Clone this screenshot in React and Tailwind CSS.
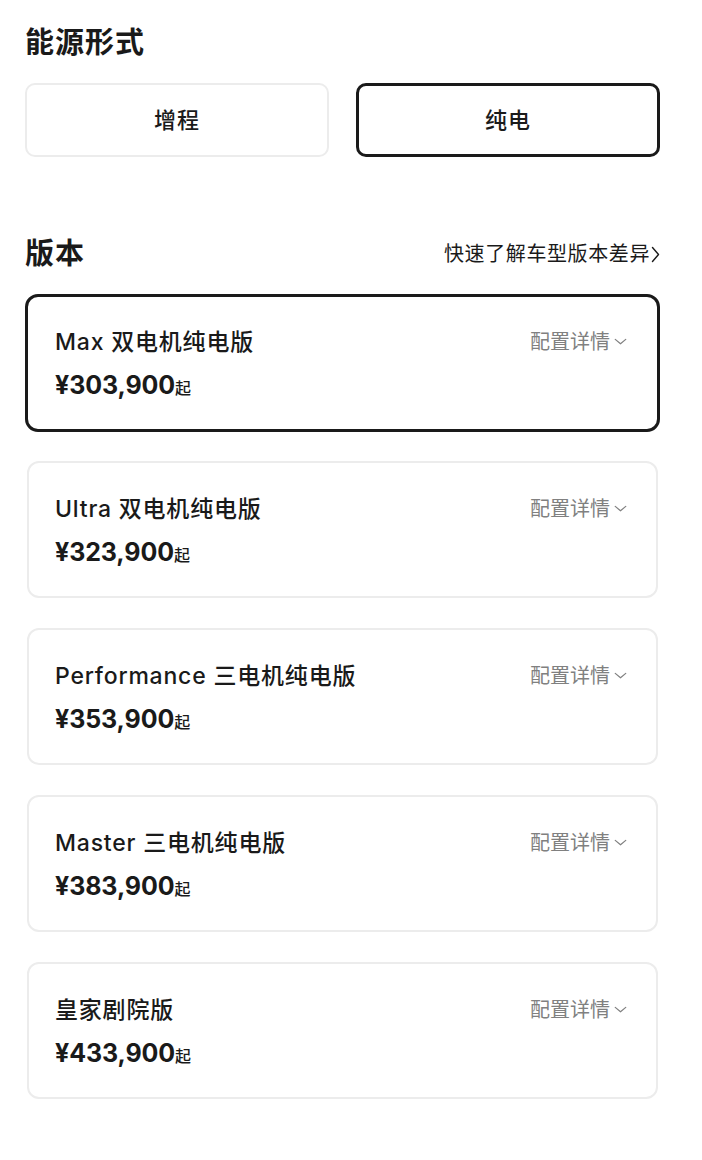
import React from "react";

const versions = [
  { name: "Max 双电机纯电版", price: "¥303,900" },
  { name: "Ultra 双电机纯电版", price: "¥323,900" },
  { name: "Performance 三电机纯电版", price: "¥353,900" },
  { name: "Master 三电机纯电版", price: "¥383,900" },
  { name: "皇家剧院版", price: "¥433,900" },
];

const Chevron = ({ className, d, vb = "0 0 16 16" }) => (
  <svg className={className} viewBox={vb} fill="none" stroke="currentColor" strokeWidth="1.4" strokeLinecap="round" strokeLinejoin="round">
    <path d={d} />
  </svg>
);

export default function App() {
  const selected = 0;
  return (
    <div
      className="w-[702px] min-h-[1160px] bg-white pl-[25px] pr-[42px] pt-[26px] text-[#1a1a1a]"
      style={{ fontFamily: 'Inter, "Noto Sans CJK SC", sans-serif' }}
    >
      {/* 能源形式 */}
      <h2 className="text-[29px] font-bold leading-[34px] tracking-[1px]">能源形式</h2>
      <div className="mt-[23px] grid grid-cols-2 gap-[27px]">
        <button className="h-[74px] rounded-[10px] border-2 border-[#ececec] bg-white text-[22px] font-medium tracking-[1px]">
          增程
        </button>
        <button className="h-[74px] rounded-[10px] border-[3px] border-[#1a1a1a] bg-white text-[22px] font-medium tracking-[1px]">
          纯电
        </button>
      </div>

      {/* 版本 */}
      <div className="mt-[78px] flex items-center justify-between">
        <h2 className="text-[29px] font-bold leading-[38px] tracking-[1px]">版本</h2>
        <div className="flex items-center text-[20px] tracking-[0.6px] text-[#1a1a1a]">
          快速了解车型版本差异
          <Chevron className="ml-[1px] h-[17px] w-[9px]" vb="0 0 9 17" d="M1.5 1.5l6 7-6 7" />
        </div>
      </div>

      <div className="mt-[21px] flex flex-col gap-[30px]">
        {versions.map((v, i) => {
          const active = i === selected;
          return (
            <div
              key={v.name}
              className={
                active
                  ? "-mb-[1px] flex justify-between rounded-[13px] border-[3px] border-[#1a1a1a] bg-white pl-[27px] pr-[28px] pt-[30px] pb-[29px]"
                  : "mx-[2px] flex justify-between rounded-[12px] border-2 border-[#ececec] bg-white pl-[26px] pr-[27px] pt-[31px] pb-[29px]"
              }
            >
              <div>
                <div className="text-[23px] font-medium leading-[30px] tracking-[0.8px]">{v.name}</div>
                <div className="mt-[13px] flex h-[30px] items-baseline leading-[30px]">
                  <span className="text-[25px] font-bold tracking-[-0.1px]">{v.price}</span>
                  <span className="text-[16px] font-medium">起</span>
                </div>
              </div>
              <div className="flex h-[30px] items-center text-[20px] text-[#808080]">
                配置详情
                <Chevron className="ml-[2px] h-[14px] w-[17px]" d="M2 5l6 5 6-5" />
              </div>
            </div>
          );
        })}
      </div>
    </div>
  );
}
